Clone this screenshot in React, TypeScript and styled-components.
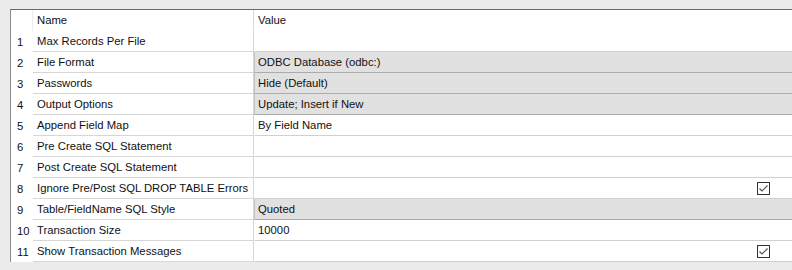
import styled, { createGlobalStyle } from "styled-components";

type Row = {
  name: string;
  value?: string;
  combo?: boolean;
  checked?: boolean;
};

const rows: Row[] = [
  { name: "Max Records Per File" },
  { name: "File Format", value: "ODBC Database (odbc:)", combo: true },
  { name: "Passwords", value: "Hide (Default)", combo: true },
  { name: "Output Options", value: "Update; Insert if New", combo: true },
  { name: "Append Field Map", value: "By Field Name" },
  { name: "Pre Create SQL Statement" },
  { name: "Post Create SQL Statement" },
  { name: "Ignore Pre/Post SQL DROP TABLE Errors", checked: true },
  { name: "Table/FieldName SQL Style", value: "Quoted", combo: true },
  { name: "Transaction Size", value: "10000" },
  { name: "Show Transaction Messages", checked: true },
];

export default function App() {
  return (
    <>
      <GlobalStyle />
      <Panel>
        <Grid>
          <HeaderRow>
            <NumCell $header />
            <NameCell $header>Name</NameCell>
            <ValueCell $header>Value</ValueCell>
          </HeaderRow>
          {rows.map((row, i) => (
            <GridRow key={row.name}>
              <NumCell>{i + 1}</NumCell>
              <NameCell>{row.name}</NameCell>
              <ValueCell $combo={row.combo}>
                {row.value}
                {row.checked && (
                  <CheckBox>
                    <svg width="11" height="11" viewBox="0 0 11 11">
                      <path d="M1.5 5.5 L4 8 L9.5 2.5" fill="none" stroke="#555" strokeWidth="1.2" />
                    </svg>
                  </CheckBox>
                )}
              </ValueCell>
            </GridRow>
          ))}
        </Grid>
      </Panel>
    </>
  );
}

const GlobalStyle = createGlobalStyle`
  html, body {
    margin: 0;
    padding: 0;
    background: #ebebeb;
  }
  body {
    font-family: "Liberation Sans", Arial, sans-serif;
    font-size: 11.3px;
    color: #111111;
  }
`;

const Panel = styled.div`
  width: 792px;
  height: 270px;
  padding: 9px 0 0 10px;
  box-sizing: border-box;
  background: #ebebeb;
  overflow: hidden;
`;

const Grid = styled.div`
  display: flex;
  flex-direction: column;
  border-top: 1px solid #6a6a6a;
  border-left: 1px solid #8a8a8a;
  background: #ffffff;
`;

const GridRow = styled.div`
  display: grid;
  grid-template-columns: 22px 221px 1fr;
  height: 21px;
`;

const HeaderRow = styled(GridRow)``;

const NumCell = styled.div<{ $header?: boolean }>`
  display: flex;
  align-items: center;
  padding-left: 6px;
  background: #ffffff;
  border-right: 1px solid ${(p) => (p.$header ? "#ededed" : "transparent")};
`;

const NameCell = styled.div<{ $header?: boolean }>`
  display: flex;
  align-items: center;
  padding-left: 4px;
  border-bottom: 1px solid ${(p) => (p.$header ? "transparent" : "#d6d6d6")};
  border-right: 1px solid #d6d6d6;
  white-space: nowrap;
  overflow: hidden;
`;

const ValueCell = styled.div<{ $combo?: boolean; $header?: boolean }>`
  display: flex;
  align-items: center;
  justify-content: space-between;
  padding: 0 22px 0 3px;
  white-space: nowrap;
  background: ${(p) => (p.$combo ? "#e1e1e1" : "#ffffff")};
  border-left: 1px solid ${(p) => (p.$combo ? "#c4c4c4" : "#ffffff")};
  border-bottom: 1px solid
    ${(p) => (p.$header ? "transparent" : p.$combo ? "#ababab" : "#d0d0d0")};
`;

const CheckBox = styled.span`
  display: flex;
  align-items: center;
  justify-content: center;
  width: 11px;
  height: 11px;
  margin-left: auto;
  border: 1px solid #333333;
  background: #ffffff;
`;
